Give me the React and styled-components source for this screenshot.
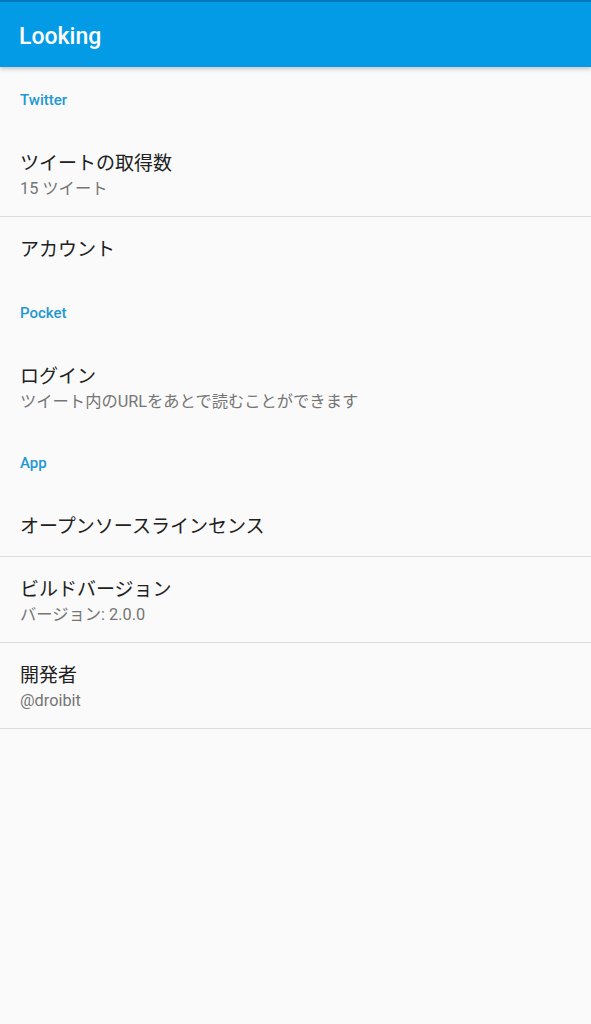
import React from "react";
import styled, { createGlobalStyle } from "styled-components";

const GlobalStyle = createGlobalStyle`
  html, body {
    margin: 0;
    padding: 0;
    background: #fafafa;
  }
  body {
    font-family: Roboto, "Noto Sans CJK JP", sans-serif;
  }
`;

const sections = [
  {
    title: "Twitter",
    items: [
      { title: "ツイートの取得数", summary: "15 ツイート", divider: true },
      { title: "アカウント" },
    ],
  },
  {
    title: "Pocket",
    items: [
      { title: "ログイン", summary: "ツイート内のURLをあとで読むことができます" },
    ],
  },
  {
    title: "App",
    items: [
      { title: "オープンソースラインセンス", divider: true },
      { title: "ビルドバージョン", summary: "バージョン: 2.0.0", divider: true },
      { title: "開発者", summary: "@droibit", divider: true },
    ],
  },
];

const Screen = () => (
  <Page>
    <GlobalStyle />
    <AppBar>
      <Title>Looking</Title>
    </AppBar>
    <List>
      {sections.map((s) => (
        <section key={s.title}>
          <Category>{s.title}</Category>
          {s.items.map((item) => (
            <Item key={item.title} twoLine={!!item.summary} divider={item.divider}>
              <ItemTitle>{item.title}</ItemTitle>
              {item.summary && <Summary>{item.summary}</Summary>}
            </Item>
          ))}
        </section>
      ))}
    </List>
  </Page>
);

const Page = styled.div`
  min-height: 1024px;
  background: #fafafa;
`;

const AppBar = styled.header`
  position: relative;
  z-index: 1;
  height: 65px;
  display: flex;
  align-items: center;
  padding: 0 19px;
  background: #039be5;
  border-top: 2px solid #0277bd;
  box-shadow: 0 2px 4px rgba(0, 0, 0, 0.22);
`;

const Title = styled.h1`
  margin: 0;
  padding-top: 3px;
  color: #fff;
  font-size: 23px;
  font-weight: 500;
`;

const List = styled.div`
  display: flex;
  flex-direction: column;
`;

const Category = styled.div`
  height: 64px;
  display: flex;
  align-items: center;
  padding: 1px 20px 0;
  box-sizing: border-box;
  color: #1e98d4;
  font-size: 15px;
  font-weight: 500;
`;

const Item = styled.div`
  display: flex;
  flex-direction: column;
  justify-content: center;
  box-sizing: border-box;
  height: ${(p) => (p.twoLine ? "86px" : "63px")};
  padding: 4px 20px 0;
  border-bottom: 1px solid ${(p) => (p.divider ? "#dddddd" : "transparent")};
`;

const ItemTitle = styled.div`
  color: #212121;
  font-size: 19px;
  line-height: 24px;
`;

const Summary = styled.div`
  margin-top: 2px;
  color: #757575;
  font-size: 16.3px;
  line-height: 21px;
`;

export default Screen;
